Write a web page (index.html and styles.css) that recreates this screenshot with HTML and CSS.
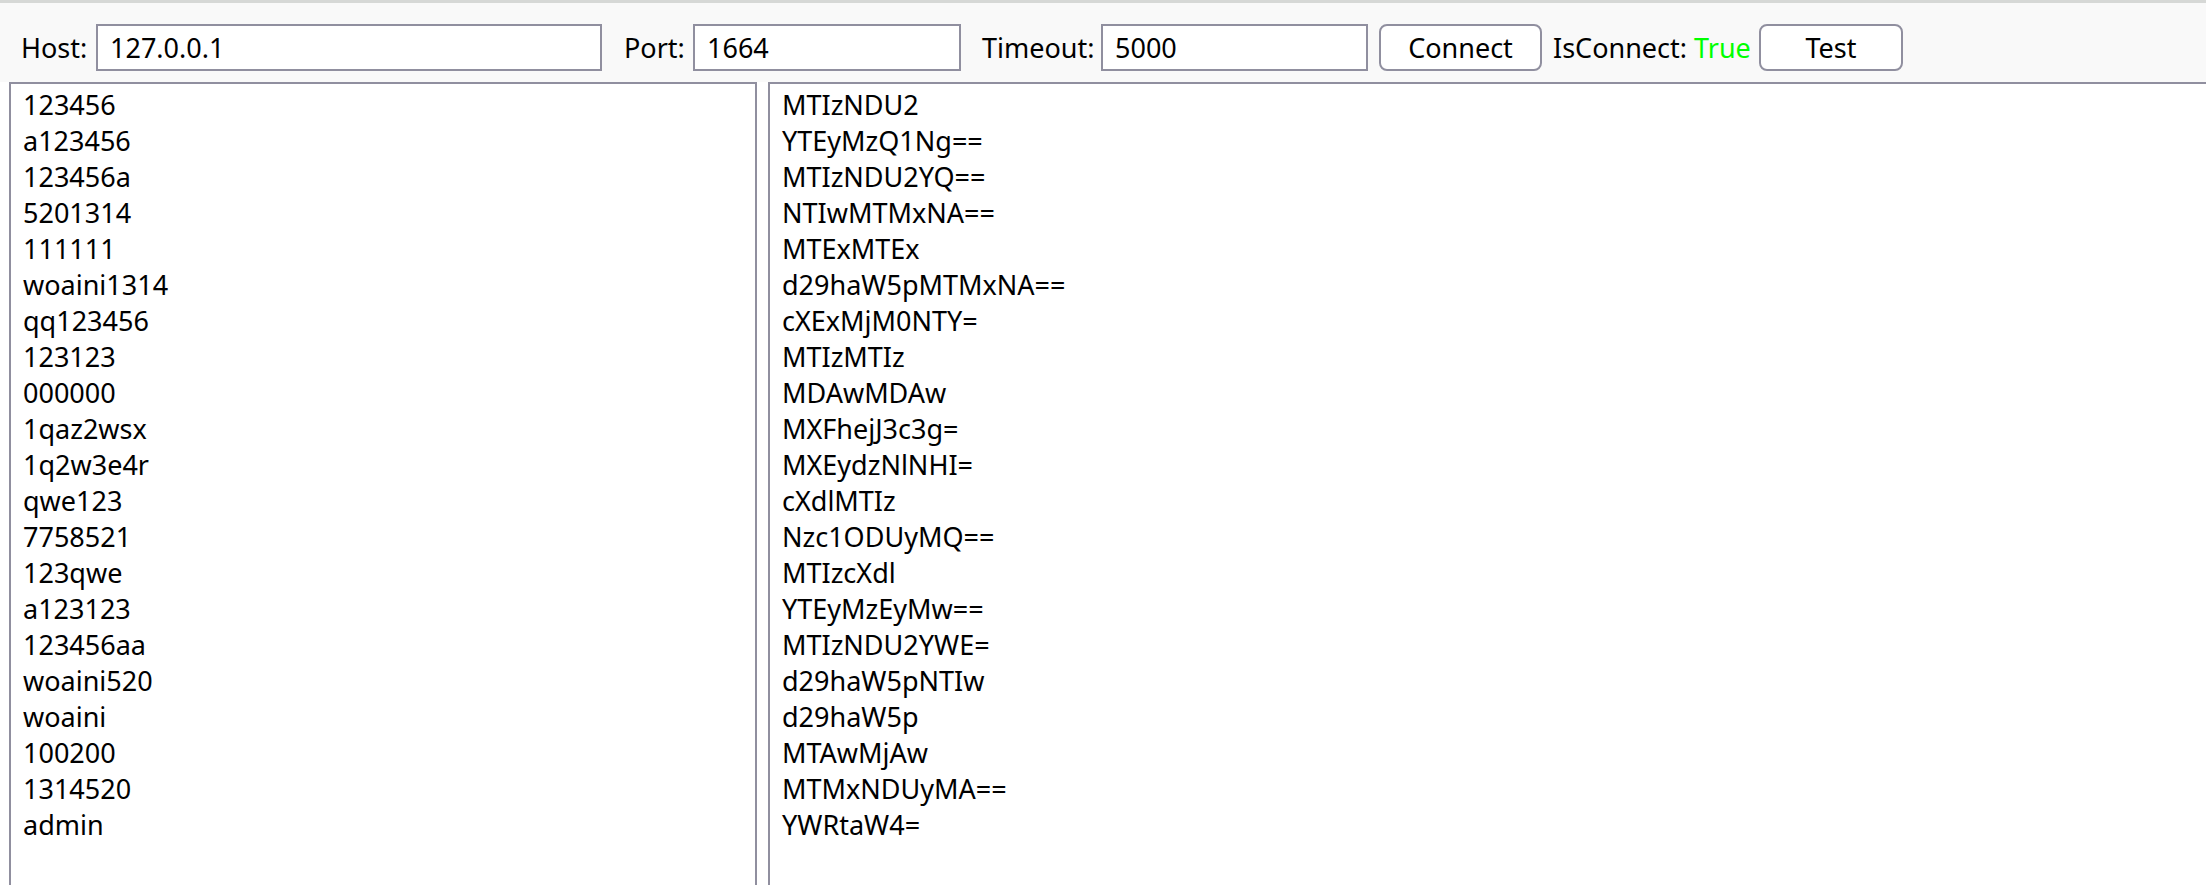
FILE: index.html
```html
<!DOCTYPE html>
<html lang="en">
<head>
    <meta charset="UTF-8">
    <title>Base64 Client</title>
    <link rel="stylesheet" href="styles.css">
</head>
<body>
    <div class="toolbar">
        <span class="label label-host">Host:</span>
        <input class="box box-host" type="text" value="127.0.0.1">
        <span class="label label-port">Port:</span>
        <input class="box box-port" type="text" value="1664">
        <span class="label label-timeout">Timeout:</span>
        <input class="box box-timeout" type="text" value="5000">
        <button class="btn btn-connect">Connect</button>
        <span class="status">IsConnect: <span class="ok">True</span></span>
        <button class="btn btn-test">Test</button>
    </div>
    <div class="panels">
        <div class="panel panel-left">
            <div>123456</div>
            <div>a123456</div>
            <div>123456a</div>
            <div>5201314</div>
            <div>111111</div>
            <div>woaini1314</div>
            <div>qq123456</div>
            <div>123123</div>
            <div>000000</div>
            <div>1qaz2wsx</div>
            <div>1q2w3e4r</div>
            <div>qwe123</div>
            <div>7758521</div>
            <div>123qwe</div>
            <div>a123123</div>
            <div>123456aa</div>
            <div>woaini520</div>
            <div>woaini</div>
            <div>100200</div>
            <div>1314520</div>
            <div>admin</div>
        </div>
        <div class="panel panel-right">
            <div>MTIzNDU2</div>
            <div>YTEyMzQ1Ng==</div>
            <div>MTIzNDU2YQ==</div>
            <div>NTIwMTMxNA==</div>
            <div>MTExMTEx</div>
            <div>d29haW5pMTMxNA==</div>
            <div>cXExMjM0NTY=</div>
            <div>MTIzMTIz</div>
            <div>MDAwMDAw</div>
            <div>MXFhejJ3c3g=</div>
            <div>MXEydzNlNHI=</div>
            <div>cXdlMTIz</div>
            <div>Nzc1ODUyMQ==</div>
            <div>MTIzcXdl</div>
            <div>YTEyMzEyMw==</div>
            <div>MTIzNDU2YWE=</div>
            <div>d29haW5pNTIw</div>
            <div>d29haW5p</div>
            <div>MTAwMjAw</div>
            <div>MTMxNDUyMA==</div>
            <div>YWRtaW4=</div>
        </div>
    </div>
</body>
</html>
```

FILE: styles.css
```css
* {
    margin: 0;
    padding: 0;
    box-sizing: border-box;
    font-family: "Noto Sans", sans-serif;
}
body {
    background: #fff;
    color: #000;
    font-size: 27px;
    overflow: hidden;
}
.toolbar {
    display: flex;
    align-items: center;
    height: 82px;
    padding: 21px 0 11px 21px;
    background: #f9f9f9;
    border-top: 3px solid #d6d8d6;
}
.label {
    flex: none;
    white-space: nowrap;
}
.label-host {
    width: 75px;
}
.label-port {
    width: 69px;
    margin-left: 22px;
}
.label-timeout {
    width: 119px;
    margin-left: 21px;
}
.box {
    flex: none;
    height: 47px;
    padding: 0 12px;
    border: 2px solid #908f9f;
    background: #fff;
    color: #000;
    font-size: 27px;
    outline: none;
}
.box-host {
    width: 506px;
}
.box-port {
    width: 268px;
}
.box-timeout {
    width: 267px;
}
.btn {
    flex: none;
    height: 47px;
    border: 2px solid #908f9f;
    border-radius: 8px;
    background: #fff;
    color: #000;
    font-size: 27px;
}
.btn-connect {
    width: 163px;
    margin-left: 11px;
}
.btn-test {
    width: 144px;
}
.status {
    flex: none;
    width: 206px;
    margin-left: 11px;
    white-space: nowrap;
}
.ok {
    color: #00ff00;
}
.panels {
    display: flex;
    gap: 11px;
    height: 803px;
    padding-left: 9px;
    overflow: hidden;
}
.panel {
    padding: 3px 12px;
    line-height: 36px;
    border: 2px solid #908f9f;
    border-bottom: none;
    white-space: nowrap;
}
.panel-left {
    flex: none;
    width: 748px;
}
.panel-right {
    flex: 1;
    border-right: none;
}
```
